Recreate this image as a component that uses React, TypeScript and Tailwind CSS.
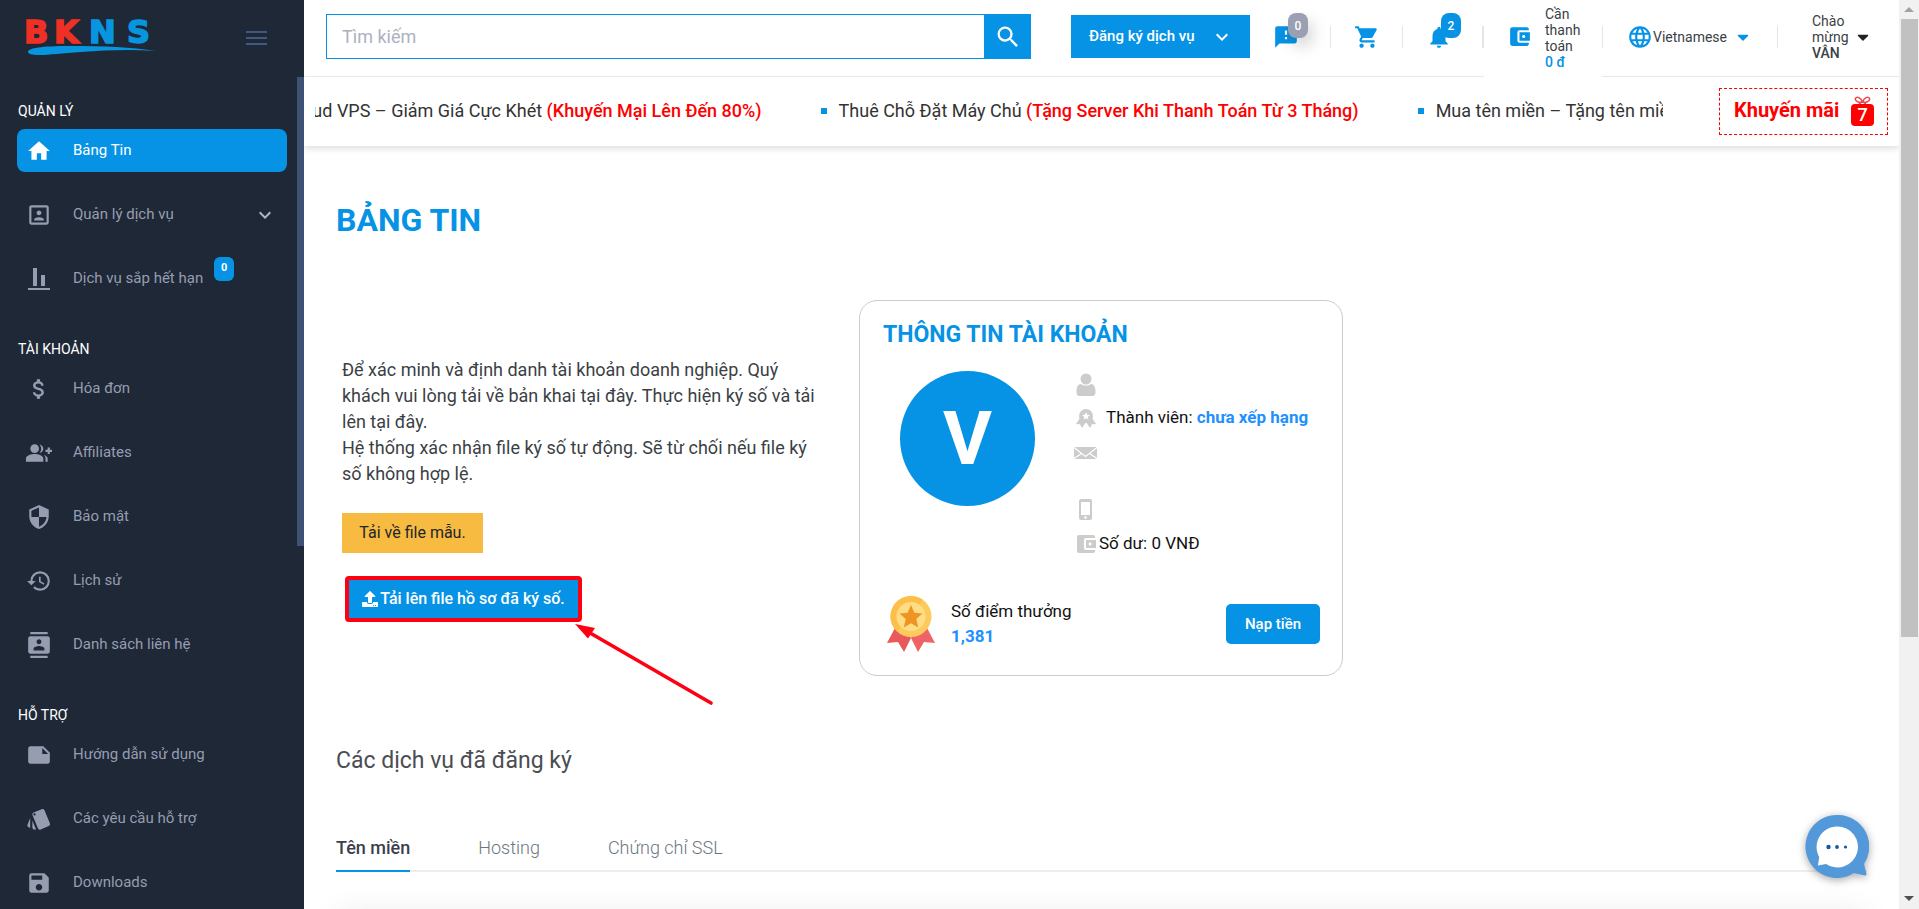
import type { ComponentType, ReactNode } from "react";
import {
  MdAccountBalanceWallet,
  MdAttachMoney,
  MdContacts,
  MdFeedback,
  MdGroupAdd,
  MdHistory,
  MdHome,
  MdKeyboardArrowDown,
  MdLanguage,
  MdNote,
  MdNotifications,
  MdPortrait,
  MdSave,
  MdSearch,
  MdSecurity,
  MdShoppingCart,
  MdStyle,
} from "react-icons/md";
import { FaCaretDown, FaUpload } from "react-icons/fa";

type IconProps = { className?: string };

type MenuItem = {
  label: string;
  icon: ComponentType<IconProps>;
  active?: boolean;
  expandable?: boolean;
  badge?: string;
};

function BarsIcon({ className }: IconProps) {
  return (
    <svg viewBox="0 0 26 26" className={className} fill="currentColor">
      <path d="M2 22h22v2H2zM7 2h4v18H7zM15 9h4v11h-4z" />
    </svg>
  );
}

const menu: { title: string; items: MenuItem[] }[] = [
  {
    title: "QUẢN LÝ",
    items: [
      { label: "Bảng Tin", icon: MdHome, active: true },
      { label: "Quản lý dịch vụ", icon: MdPortrait, expandable: true },
      { label: "Dịch vụ sắp hết hạn", icon: BarsIcon, badge: "0" },
    ],
  },
  {
    title: "TÀI KHOẢN",
    items: [
      { label: "Hóa đơn", icon: MdAttachMoney },
      { label: "Affiliates", icon: MdGroupAdd },
      { label: "Bảo mật", icon: MdSecurity },
      { label: "Lịch sử", icon: MdHistory },
      { label: "Danh sách liên hệ", icon: MdContacts },
    ],
  },
  {
    title: "HỖ TRỢ",
    items: [
      { label: "Hướng dẫn sử dụng", icon: MdNote },
      { label: "Các yêu cầu hỗ trợ", icon: MdStyle },
      { label: "Downloads", icon: MdSave },
    ],
  },
];

const promos = [
  { text: "Cloud VPS – Giảm Giá Cực Khét", note: "(Khuyến Mại Lên Đến 80%)" },
  { text: "Thuê Chỗ Đặt Máy Chủ", note: "(Tặng Server Khi Thanh Toán Từ 3 Tháng)" },
  { text: "Mua tên miền – Tặng tên miền", note: "" },
];

const tabs = ["Tên miền", "Hosting", "Chứng chỉ SSL"];

function Logo() {
  return (
    <a href="#" aria-label="BKNS" className="block">
      <svg viewBox="0 -10 136 50" className="h-[50px] w-[136px]">
        <g fontFamily="DejaVu Sans" fontWeight="700" fontSize="32" strokeWidth="1.6">
          <text x="0" y="25" fill="#ee3124" stroke="#ee3124">B</text>
          <text x="30" y="25" fill="#ee3124" stroke="#ee3124">K</text>
          <text x="65" y="25" fill="#0795e0" stroke="#0795e0">N</text>
          <text x="103" y="25" fill="#0795e0" stroke="#0795e0">S</text>
        </g>
        <path d="M4 34c0-4 14-6 41-6 35 0 62 1 87 5-25-2-50-1-75 1-19 1-31 3-42 3-7 0-11-1-11-3z" fill="#0795e0" />
      </svg>
    </a>
  );
}

function SidebarLink({ label, icon: Icon, active, expandable, badge }: MenuItem) {
  return (
    <a
      href="#"
      className={`flex h-[43px] items-center rounded-lg pr-[10px] pl-[9px] text-[15px] ${active ? "bg-[#0793e5] text-white" : "text-[#979db1]"}`}
    >
      <Icon className="mr-[21px] size-[26px] shrink-0" />
      <span>{label}</span>
      {badge && (
        <span className="mb-5 ml-[11px] flex h-6 w-5 items-center justify-center rounded-md bg-[#0793e5] text-[11px] font-bold text-white">
          {badge}
        </span>
      )}
      {expandable && <MdKeyboardArrowDown className="ml-auto size-6 text-[#b0b4c3]" />}
    </a>
  );
}

function Sidebar() {
  return (
    <aside className="relative w-[304px] shrink-0 overflow-hidden bg-[#1e2837]">
      <div className="flex h-[77px] items-start justify-between pt-2 pr-[37px] pl-6">
        <Logo />
        <button aria-label="Menu" className="mt-[23px] flex w-[21px] flex-col gap-1">
          <span className="h-[2px] bg-[#3f5983]" />
          <span className="h-[2px] bg-[#3f5983]" />
          <span className="h-[2px] bg-[#3f5983]" />
        </button>
      </div>
      <nav className="flex flex-col gap-[39px] pt-6 pr-[17px] pl-[17px]">
        {menu.map(({ title, items }) => (
          <div key={title}>
            <h2 className="mb-2 pl-px text-sm leading-5 text-white">{title}</h2>
            <div className="flex flex-col gap-[21px]">
              {items.map((item) => (
                <SidebarLink key={item.label} {...item} />
              ))}
            </div>
          </div>
        ))}
      </nav>
      {/* Menu scroll thumb */}
      <div className="absolute top-[77px] right-0 h-[469px] w-[7px] bg-[#3d5275]" />
    </aside>
  );
}

function Divider({ className = "w-px" }: { className?: string }) {
  return <span className={`h-[22px] shrink-0 bg-[#e4e5ea] ${className}`} />;
}

function CountBadge({ className, children }: { className: string; children: ReactNode }) {
  return (
    <span className={`absolute flex h-[25px] w-5 items-center justify-center rounded-lg text-xs font-medium text-white ${className}`}>
      {children}
    </span>
  );
}

function Header() {
  return (
    <header className="flex h-[77px] items-stretch border-b border-[#ebedf2] pl-[22px] text-[#3b3f45]">
      <form className="mt-[14px] flex h-[45px] flex-1">
        <input
          type="text"
          aria-label="Tìm kiếm"
          placeholder="Tìm kiếm"
          className="min-w-0 flex-1 border border-[#0793e5] px-[15px] text-lg outline-none placeholder:text-[#adb1bf]"
        />
        <button type="button" aria-label="Tìm" className="flex w-[46px] items-center justify-center bg-[#0793e5] text-white">
          <MdSearch className="size-7" />
        </button>
      </form>
      <button className="mt-[15px] ml-10 flex h-[43px] w-[179px] items-center justify-between bg-[#0793e5] pr-4 pl-[18px] text-[15px] font-medium text-white">
        Đăng ký dịch vụ
        <MdKeyboardArrowDown className="size-6" />
      </button>

      <div className="flex h-[74px] items-center text-[#0793e5]">
        <button aria-label="Phản hồi" className="relative flex w-20 pl-[23px]">
          <MdFeedback className="size-[26px]" />
          <CountBadge className="-top-[11px] left-[38px] bg-[#9a9fb3] shadow-[4px_8px_16px_rgba(0,0,0,0.18)]">0</CountBadge>
        </button>
        <Divider />
        <button aria-label="Giỏ hàng" className="flex w-[71px] justify-center">
          <MdShoppingCart className="size-[26px]" />
        </button>
        <Divider />
        <button aria-label="Thông báo" className="relative flex w-[79px] pl-[23px]">
          <MdNotifications className="size-[26px]" />
          <CountBadge className="-top-[11px] left-[38px] bg-[#0793e5]">2</CountBadge>
        </button>
        <Divider className="w-[2px]" />
      </div>

      {/* Amount due, covers the header rule */}
      <div className="relative -mb-px flex w-[118px] bg-white pl-[23px]">
        <MdAccountBalanceWallet className="mt-[24px] size-[25px] shrink-0 text-[#0793e5]" />
        <p className="mt-[6px] ml-[13px] w-10 text-sm leading-4">
          Cần thanh toán <span className="block font-medium text-[#0793e5]">0 đ</span>
        </p>
      </div>

      <div className="flex h-[74px] items-center text-sm">
        <Divider />
        <button className="flex w-[174px] items-center pl-6">
          <MdLanguage className="size-[26px] shrink-0 text-[#0793e5]" />
          Vietnamese
          <FaCaretDown className="ml-[7px] size-[18px] text-[#0793e5]" />
        </button>
        <Divider />
        <button className="flex w-[121px] items-center pl-[34px] text-left leading-4">
          <span className="w-10">
            Chào mừng <strong className="font-medium">VÂN</strong>
          </span>
          <FaCaretDown className="ml-[2px] size-[18px] shrink-0 text-[#222]" />
        </button>
      </div>
    </header>
  );
}

function GiftIcon() {
  return (
    <span className="flex w-[23px] flex-col items-center">
      <svg viewBox="0 0 23 8" className="h-2 w-[23px]" fill="none" stroke="#e8474a" strokeWidth="1.500">
        <path d="M11.500 6C9 7 3.500 5.500 4.500 2.500 5.500 0 10 1.500 11.500 6zM11.500 6c2.500 1 8-.500 7-3.500-1-2.500-5.500-1-7 3.500zM11 6 8 8M12 6l3 2" />
      </svg>
      <span className="flex h-[22px] w-full items-center justify-center rounded-sm bg-[#fe0000] text-lg font-medium text-white">7</span>
    </span>
  );
}

function PromoBar() {
  return (
    <div className="flex h-[69px] items-center pr-[11px] pl-[11px] shadow-[0_3px_6px_rgba(0,0,0,0.12)]">
      <div className="flex-1 overflow-hidden pb-[2px]">
        <ul className="-ml-[47px] flex gap-[59px] text-lg whitespace-nowrap text-[#333]">
          {promos.map(({ text, note }) => (
            <li key={text} className="flex items-center">
              <span className="mr-3 size-[6px] bg-[#0793e5]" />
              <span>
                {text} <span className="font-medium text-[#fe0000]">{note}</span>
              </span>
            </li>
          ))}
        </ul>
      </div>
      <a
        href="#"
        className="ml-14 flex h-[47px] w-[169px] shrink-0 items-center justify-between border border-dashed border-[#fe0000] pr-[13px] pb-[2px] pl-[14px] text-xl leading-6 font-bold text-[#fe0000]"
      >
        <span className="pb-[2px]">Khuyến mãi</span>
        <GiftIcon />
      </a>
    </div>
  );
}

function UserIcon() {
  return (
    <svg viewBox="0 0 20 24" className="h-6 w-5" fill="#ccc">
      <circle cx="10" cy="6" r="5.500" />
      <path d="M5 11c3 2 7 2 10 0 3 0 4.500 3 4.500 8 0 2.500-1 4-3 4h-13c-2 0-3-1.500-3-4 0-5 1.500-8 4.500-8z" />
    </svg>
  );
}

function RibbonIcon() {
  return (
    <svg viewBox="0 0 20 19" className="h-[19px] w-5" fill="#ccc">
      <path d="M4 9 0 15l4 .300L6 19l4-6 4 6 2-3.700 4-.300-4-6z" />
      <circle cx="10" cy="7" r="7" />
      <path d="m10 3.200 1.200 2.500 2.700.300-2 1.900.600 2.700L10 9.300l-2.500 1.300.600-2.700-2-1.900 2.700-.300z" fill="#fff" />
    </svg>
  );
}

function MailIcon() {
  return (
    <svg viewBox="0 0 23 12" className="h-3 w-[23px]">
      <path d="M0 0h23v12H0z" fill="#ccc" />
      <path d="M0 .500 11.500 9.500 23 .500M0 11.500 7.500 6.500M23 11.500 15.500 6.500" fill="none" stroke="#fff" strokeWidth="1.200" />
    </svg>
  );
}

function PhoneIcon() {
  return (
    <svg viewBox="0 0 13 21" className="h-[21px] w-[13px]">
      <rect width="13" height="21" rx="2" fill="#ccc" />
      <path d="M2 3h9v13H2z" fill="#fff" />
      <circle cx="6.500" cy="18.500" r="1.300" fill="#fff" />
    </svg>
  );
}

function MedalIcon() {
  return (
    <svg viewBox="0 0 48 56" className="h-14 w-12">
      <path d="M8 32 0 47l11-1 6 10 7-14-6-10z" fill="#e9585a" />
      <path d="m40 32 8 15-11-1-6 10-7-14 6-10z" fill="#ee6466" />
      <circle cx="24" cy="20.500" r="20.500" fill="#fdcb5b" />
      <path d="M24 0A20.500 20.500 0 0 0 10 35.500L36 4A20.500 20.500 0 0 0 24 0z" fill="#fdbf49" />
      <circle cx="24" cy="20.500" r="14.500" fill="#fede85" />
      <path d="m24 9 3.400 7.800 8.100.700-6.200 5.600 1.900 8.300L24 27.200l-7.200 4.200 1.900-8.300-6.200-5.600 8.100-.700z" fill="#ee9422" />
    </svg>
  );
}

function AccountCard() {
  return (
    <section className="flex h-[376px] w-[484px] flex-col rounded-[18px] border border-[#ccc] pr-[22px] pl-[23px] text-[17px] text-[#111]">
      <h2 className="mt-[18px] text-[23px] leading-8 font-bold text-[#0793e5]">THÔNG TIN TÀI KHOẢN</h2>
      <div className="mt-5 flex">
        <div className="ml-[17px] flex size-[135px] shrink-0 items-center justify-center rounded-full bg-[#0793e5] text-[75px] font-bold text-white">
          V
        </div>
        <ul className="ml-[39px]">
          <li className="flex h-7 w-[23px] items-center justify-center">
            <UserIcon />
          </li>
          <li className="flex h-[38px] items-center">
            <span className="mr-[9px] flex w-[23px] justify-center">
              <RibbonIcon />
            </span>
            <span>
              Thành viên: <strong className="font-bold text-[#1e90ff]">chưa xếp hạng</strong>
            </span>
          </li>
          <li className="flex h-8 w-[23px] items-center justify-center">
            <MailIcon />
          </li>
          <li className="mt-5 flex h-10 w-[23px] items-center justify-center">
            <PhoneIcon />
          </li>
          <li className="mt-[7px] flex h-4 items-center">
            <MdAccountBalanceWallet className="mr-px size-6 text-[#ccc]" />
            Số dư: 0 VNĐ
          </li>
        </ul>
      </div>
      <div className="mt-auto mb-[23px] flex items-center">
        <span className="mr-4 ml-1">
          <MedalIcon />
        </span>
        <p className="leading-[25px]">
          Số điểm thưởng
          <strong className="block font-bold text-[#1e90ff]">1,381</strong>
        </p>
        <button className="ml-auto h-10 w-[94px] rounded-[5px] bg-[#0793e5] text-[15px] font-medium text-white">Nạp tiền</button>
      </div>
    </section>
  );
}

function VerifyPanel() {
  return (
    <div className="w-[523px] pt-[57px] pr-11 pl-[6px]">
      <p className="text-lg leading-[26px] text-[#3b3f45]">
        Để xác minh và định danh tài khoản doanh nghiệp. Quý khách vui lòng tải về bản khai tại đây. Thực hiện ký số và tải lên tại đây.
        <br />
        Hệ thống xác nhận file ký số tự động. Sẽ từ chối nếu file ký số không hợp lệ.
      </p>
      <button className="mt-[26px] block h-10 w-[141px] bg-[#f8bb41] text-base text-[#212529]">Tải về file mẫu.</button>
      <div className="relative mt-[23px] ml-[3px] w-[237px]">
        <button className="flex h-[46px] w-full items-center justify-center gap-[2px] rounded-sm border-4 border-[#fe0012] bg-[#0793e5] text-base font-medium text-white">
          <FaUpload className="size-4" />
          Tải lên file hồ sơ đã ký số.
        </button>
        <svg viewBox="0 0 140 82" className="absolute top-12 left-[230px] h-[82px] w-[140px]">
          <path d="M16 9.500 136 79" stroke="#fe0012" strokeWidth="3.600" strokeLinecap="round" />
          <path d="M0 0 20 4 13 14.500z" fill="#fe0012" />
        </svg>
      </div>
    </div>
  );
}

function ServiceTabs() {
  return (
    <section className="mt-[69px]">
      <h2 className="text-[23px] leading-8 text-[#4a4d52]">Các dịch vụ đã đăng ký</h2>
      <div role="tablist" className="mt-[57px] flex gap-[68px] border-b-2 border-[#eee] text-lg leading-7">
        {tabs.map((tab, i) => (
          <button
            key={tab}
            role="tab"
            aria-selected={i === 0}
            className={`-mb-[2px] border-b-2 pb-2 ${i === 0 ? "border-[#0793e5] font-medium text-[#3b3f4c]" : "border-transparent font-light text-[#6c7580]"}`}
          >
            {tab}
          </button>
        ))}
      </div>
      <div className="mt-10 h-40 rounded-lg bg-white shadow-[0_0_30px_rgba(0,0,0,0.08)]" />
    </section>
  );
}

function ChatButton() {
  return (
    <button aria-label="Chat" className="absolute right-[30px] bottom-[30px] drop-shadow-[0_2px_4px_rgba(0,0,0,0.35)]">
      <svg viewBox="0 0 64 64" className="size-16">
        <path d="M32 0a31.500 31.500 0 1 0 17 58l11 2.500c1 0 1.500-.500 1.500-1.500L59 49A31.500 31.500 0 0 0 32 0z" fill="#5399da" />
        <path d="M32 11.500a20.500 20.500 0 0 0-17.800 30.500L13 50.500l8-1.500a20.500 20.500 0 1 0 11-37.500z" fill="#fff" />
        <g fill="#135a99">
          <circle cx="23.500" cy="32" r="2.200" />
          <circle cx="32" cy="32" r="1.900" />
          <circle cx="40.500" cy="32" r="1.600" />
        </g>
      </svg>
    </button>
  );
}

function PageScrollbar() {
  return (
    <div className="flex w-5 shrink-0 flex-col items-center bg-[#f1f1f1]">
      <svg viewBox="0 0 10 5" className="mt-[7px] mb-[7px] h-[5px] w-[10px]" fill="#a3a3a3">
        <path d="M5 0l5 5H0z" />
      </svg>
      <div className="h-[68%] w-[17px] bg-[#c1c1c1]" />
      <svg viewBox="0 0 10 5" className="mt-auto mb-2 h-[5px] w-[10px]" fill="#505050">
        <path d="M0 0h10L5 5z" />
      </svg>
    </div>
  );
}

export default function App() {
  return (
    <div className="flex h-screen overflow-hidden bg-white font-[Roboto,'Liberation_Sans',sans-serif]">
      <Sidebar />
      <div className="relative flex min-w-0 flex-1 flex-col overflow-hidden">
        <Header />
        <PromoBar />
        <main className="min-h-0 flex-1 overflow-hidden px-8 pt-[54px]">
          <h1 className="text-[32px] leading-10 font-bold text-[#0793e5]">BẢNG TIN</h1>
          <div className="mt-[60px] flex items-start">
            <VerifyPanel />
            <AccountCard />
          </div>
          <ServiceTabs />
        </main>
        <ChatButton />
      </div>
      <PageScrollbar />
    </div>
  );
}
